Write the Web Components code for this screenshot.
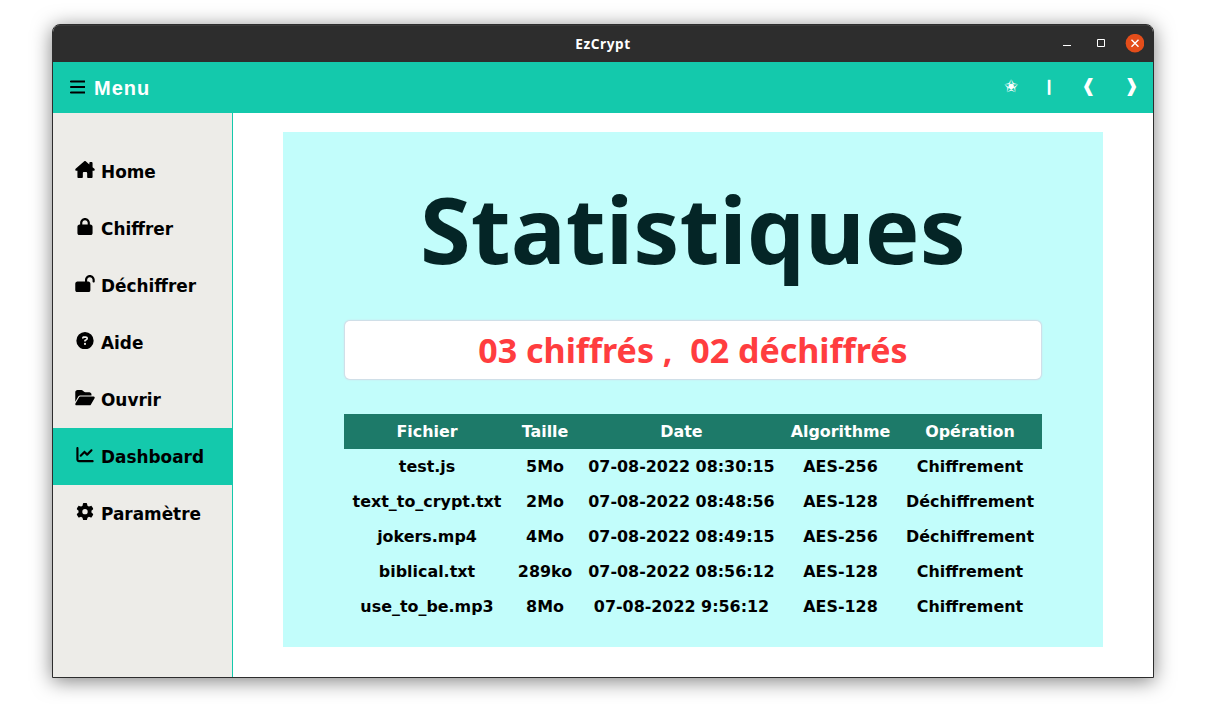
<!DOCTYPE html>
<html lang="fr">
<head>
<meta charset="utf-8">
<title>EzCrypt</title>
<style>
html,body{margin:0;height:100%;background:#fff;overflow:hidden}
body{font-family:"DejaVu Sans",sans-serif;font-weight:700}
</style>
</head>
<body>
<ez-window>
  <ez-titlebar slot="title">EzCrypt</ez-titlebar>
  <ez-toolbar slot="toolbar">Menu</ez-toolbar>
  <ez-sidebar slot="side">
    <ez-item icon="house">Home</ez-item>
    <ez-item icon="lock">Chiffrer</ez-item>
    <ez-item icon="open">Déchiffrer</ez-item>
    <ez-item icon="help">Aide</ez-item>
    <ez-item icon="folder">Ouvrir</ez-item>
    <ez-item icon="chart" active>Dashboard</ez-item>
    <ez-item icon="gear">Paramètre</ez-item>
  </ez-sidebar>
  <ez-panel>
    <span slot="heading">Statistiques</span>
    <span slot="summary">03 chiffrés ,&nbsp; 02 déchiffrés</span>
    <ez-table></ez-table>
  </ez-panel>
</ez-window>
<script>
const define = (name, html, init) => customElements.define(name, class extends HTMLElement {
  constructor() {
    super();
    this.attachShadow({ mode: 'open' });
  }
  connectedCallback() {
    this.shadowRoot.innerHTML = html;
    if (init) init(this, this.shadowRoot);
  }
});

define('ez-window', `<style>
:host{display:grid;box-sizing:border-box;width:1102px;height:654px;margin:24px 51px 0 52px;
grid-template:37px 51px 1fr / 180px 1fr;border:1px solid #2d2d2d;border-radius:8px 8px 0 0;overflow:hidden;
background:#fff;box-shadow:0 3px 20px rgba(0,0,0,.5)}
.full{grid-column:1/-1;display:grid}
.side,.main{display:grid}
</style><div class="full"><slot name="title"></slot></div><div class="full"><slot name="toolbar"></slot></div>
<div class="side"><slot name="side"></slot></div><div class="main"><slot></slot></div>`);

define('ez-titlebar', `<style>
:host{display:grid;grid-template-columns:1fr auto 1fr;align-items:center;background:#2d2d2d;color:#fff;
box-shadow:inset 0 1px #393939;font:700 13.6px "Noto Sans",sans-serif}
.name{letter-spacing:.6px;padding-top:1px;line-height:18px}
.buttons{justify-self:end;display:flex;align-items:center;padding-right:9px}
svg{display:block}
</style><span></span><span class="name"><slot></slot></span><div class="buttons">
<svg width="82" height="20" viewBox="0 0 82 20"><path d="M1 11h8v1H1z" fill="#fff"/><path d="M35.5 5.500h7v7h-7z" fill="none" stroke="#fff"/><circle cx="73" cy="9.200" r="9.300" fill="#e44d1a"/><path d="M69.500 5.700l7 7m0-7l-7 7" stroke="#fff" stroke-width="1.400"/></svg></div>`);

define('ez-toolbar', `<style>
:host{display:flex;align-items:center;justify-content:space-between;background:#14c9ac;color:#fff;padding:0 0 0 17px}
.left{display:flex;align-items:center;gap:9px;font:700 20px/22px "Liberation Sans",sans-serif;letter-spacing:1px}
.left svg{display:block;margin-top:-2px;margin-left:-.5px}
.right{display:flex;align-items:center;font:700 18px/20px "DejaVu Sans",sans-serif}
.right span{display:block;text-align:center;width:43px;margin-top:-3px}
.right .star{width:40px;font-size:17px;font-weight:400}
.right .bar{width:36px;font-size:15px;font-weight:700}
</style><div class="left"><svg width="15.500" height="14" viewBox="0 0 15.500 14"><path d="M.9 1.500h13.700M.9 7h13.700M.9 12.500h13.700" stroke="#000" stroke-width="2" stroke-linecap="round"/></svg><slot></slot></div>
<div class="right"><span class="star">✬</span><span class="bar">❙</span><span>❰</span><span>❱</span></div>`);

define('ez-sidebar', `<style>
:host{display:flex;flex-direction:column;background:#edece8;border-right:1px solid #14c9ac;padding-top:30px}
</style><slot></slot>`);

const icons = {
  house: [576, 'M575.8 255.500c0 18-15 32.100-32 32.100h-32l.7 160.200c0 2.700-.2 5.400-.5 8.100V472c0 22.100-17.900 40-40 40H456c-1.100 0-2.200 0-3.300-.1c-1.400 .1-2.800 .1-4.200 .1H392c-22.100 0-40-17.900-40-40V360c0-17.700-14.300-32-32-32H256c-17.700 0-32 14.300-32 32v112c0 22.100-17.900 40-40 40H104c-22.100 0-40-17.900-40-40V287.600H32c-18 0-32-14-32-32.100c0-9 3-17 10-24L266.400 8c7-7 15-8 22-8s15 2 21 7L416 101V64c0-17.700 14.300-32 32-32h32c17.700 0 32 14.300 32 32v121l52.800 46.500c8 7 12 15 11 24z'],
  lock: [448, 'M144 144v48H304V144c0-44.200-35.800-80-80-80s-80 35.800-80 80zM80 192V144C80 64.500 144.500 0 224 0s144 64.500 144 144v48h16c35.300 0 64 28.700 64 64V448c0 35.300-28.700 64-64 64H64c-35.300 0-64-28.700-64-64V256c0-35.300 28.700-64 64-64H80z'],
  open: [576, 'M352 144c0-44.200 35.800-80 80-80s80 35.800 80 80v48c0 17.700 14.300 32 32 32s32-14.300 32-32V144C576 64.500 511.500 0 432 0S288 64.500 288 144v48H64c-35.300 0-64 28.700-64 64V448c0 35.300 28.700 64 64 64H384c35.300 0 64-28.700 64-64V256c0-35.300-28.700-64-64-64H352V144z'],
  help: [512, 'M256 512A256 256 0 1 0 256 0a256 256 0 1 0 0 512zM169.800 165.300c7.900-22.300 29.100-37.300 52.800-37.300h58.300c34.900 0 63.100 28.300 63.100 63.100c0 22.600-12.100 43.500-31.700 54.800L280 264.400c-.2 13-10.900 23.600-24 23.600c-13.300 0-24-10.700-24-24V250.500c0-8.600 4.600-16.500 12.100-20.800l44.300-25.400c4.700-2.700 7.600-7.700 7.600-13.100c0-8.400-6.800-15.100-15.100-15.100H222.600c-3.400 0-6.400 2.100-7.500 5.300l-.4 1.200c-4.400 12.500-18.200 19-30.600 14.600s-19-18.200-14.600-30.600l.3-1.300zM224 352a32 32 0 1 1 64 0 32 32 0 1 1-64 0z'],
  folder: [576, 'M88.700 223.800L0 375.800V96C0 60.700 28.700 32 64 32H181.500c17 0 33.300 6.700 45.300 18.700l26.500 26.500c12 12 28.300 18.700 45.300 18.700H416c35.300 0 64 28.700 64 64v32H144c-22.800 0-43.800 12.100-55.300 31.800zm27.600 16.100C122.100 230 132.600 224 144 224H544c11.500 0 22 6.100 27.700 16.100s5.700 22.200-.1 32.100l-112 192C453.900 474 443.400 480 432 480H32c-11.500 0-22-6.100-27.700-16.100s-5.700-22.200 .1-32.100l112-192z'],
  chart: [512, 'M64 64c0-17.700-14.300-32-32-32S0 46.300 0 64V400c0 44.200 35.800 80 80 80H480c17.700 0 32-14.300 32-32s-14.300-32-32-32H80c-8.800 0-16-7.200-16-16V64zm406.600 86.600c12.500-12.500 12.500-32.800 0-45.300s-32.800-12.500-45.300 0L320 210.700l-57.400-57.400c-12.500-12.500-32.800-12.500-45.300 0l-112 112c-12.500 12.500-12.500 32.800 0 45.300s32.800 12.500 45.300 0L240 221.300l57.400 57.400c12.500 12.500 32.800 12.500 45.300 0l128-128z'],
  gear: [512, 'M495.900 166.600c3.200 8.700 .5 18.400-6.400 24.600l-43.300 39.400c1.100 8.300 1.700 16.800 1.700 25.400s-.6 17.100-1.700 25.400l43.300 39.400c6.900 6.200 9.600 15.900 6.400 24.600c-4.400 11.900-9.700 23.300-15.800 34.300l-4.700 8.100c-6.600 11-14 21.400-22.100 31.200c-5.900 7.200-15.700 9.600-24.500 6.800l-55.700-17.700c-13.400 10.300-28.200 18.900-44 25.400l-12.500 57.100c-2 9.100-9 16.300-18.200 17.800c-13.800 2.300-28 3.500-42.500 3.500s-28.700-1.200-42.500-3.500c-9.200-1.500-16.200-8.700-18.200-17.800l-12.500-57.100c-15.800-6.500-30.600-15.100-44-25.400L83.100 425.900c-8.800 2.800-18.600 .3-24.500-6.800c-8.100-9.800-15.500-20.200-22.100-31.200l-4.700-8.100c-6.100-11-11.400-22.400-15.800-34.300c-3.200-8.700-.5-18.400 6.400-24.600l43.300-39.400C64.600 273.100 64 264.600 64 256s.6-17.100 1.700-25.400L22.400 191.200c-6.900-6.200-9.600-15.900-6.400-24.600c4.400-11.900 9.700-23.300 15.800-34.300l4.700-8.100c6.600-11 14-21.400 22.100-31.200c5.900-7.200 15.700-9.600 24.500-6.800l55.700 17.700c13.400-10.300 28.200-18.900 44-25.400l12.500-57.100c2-9.100 9-16.300 18.200-17.800C227.300 1.200 241.500 0 256 0s28.700 1.200 42.500 3.500c9.200 1.500 16.200 8.700 18.200 17.800l12.500 57.100c15.800 6.500 30.600 15.100 44 25.400l55.700-17.700c8.800-2.800 18.600-.3 24.500 6.800c8.100 9.800 15.500 20.200 22.100 31.200l4.700 8.100c6.100 11 11.400 22.400 15.800 34.300zM256 336a80 80 0 1 0 0-160 80 80 0 1 0 0 160z']
};
define('ez-item', `<style>
:host{display:flex;align-items:center;height:57px;padding-left:21px;color:#000;font-size:16.9px;box-sizing:border-box}
:host([active]){background:#14c9ac}
svg{display:block;width:22px;height:17.300px;margin:-4px 5px 0 0}
</style><svg><path fill-rule="evenodd"/></svg><slot></slot>`, (el, root) => {
  const [width, path] = icons[el.getAttribute('icon')];
  root.querySelector('svg').setAttribute('viewBox', `0 0 ${width} 512`);
  root.querySelector('path').setAttribute('d', path);
});

define('ez-panel', `<style>
:host{display:flex;flex-direction:column;box-sizing:border-box;width:820px;height:515px;margin:19px 0 0 50px;padding:0 61px;background:#c2fdfb}
h1{box-sizing:border-box;height:188px;margin:0;padding-top:47px;display:flex;justify-content:center;white-space:nowrap;color:#042526;
font:700 92px/100px "Noto Sans",sans-serif}
h1 slot,.summary slot{display:block}
.summary{box-sizing:border-box;height:58px;margin:1px 1px 35px;border-radius:5px;background:#fff;color:#ff3d3f;
box-shadow:0 0 0 1px #d0dfe8,0 0 2px 1px #cfe3ec;
display:flex;align-items:center;justify-content:center;white-space:nowrap;font:700 34px/50px "Noto Sans",sans-serif}
</style><h1><slot name="heading"></slot></h1><div class="summary"><slot name="summary"></slot></div><slot></slot>`);

const rows = [
  ['test.js', '5Mo', '07-08-2022 08:30:15', 'AES-256', 'Chiffrement'],
  ['text_to_crypt.txt', '2Mo', '07-08-2022 08:48:56', 'AES-128', 'Déchiffrement'],
  ['jokers.mp4', '4Mo', '07-08-2022 08:49:15', 'AES-256', 'Déchiffrement'],
  ['biblical.txt', '289ko', '07-08-2022 08:56:12', 'AES-128', 'Chiffrement'],
  ['use_to_be.mp3', '8Mo', '07-08-2022 9:56:12', 'AES-128', 'Chiffrement']
];
define('ez-table', `<style>
:host{display:block}
table{width:698px;table-layout:fixed;border-collapse:collapse;font:700 15.920px/19px "DejaVu Sans",sans-serif;color:#000;text-align:center}
th,td{padding:8px 0;white-space:nowrap}
thead{background:#1d7a69;color:#fff}
</style><table><colgroup><col style="width:166px"><col style="width:70px"><col style="width:203px"><col style="width:115px"><col style="width:144px"></colgroup><thead><tr><th>Fichier</th><th>Taille</th><th>Date</th><th>Algorithme</th><th>Opération</th></tr></thead><tbody></tbody></table>`, (el, root) => {
  root.querySelector('tbody').innerHTML = rows.map(r => `<tr>${r.map(c => `<td>${c}</td>`).join('')}</tr>`).join('');
});
</script>
</body>
</html>
